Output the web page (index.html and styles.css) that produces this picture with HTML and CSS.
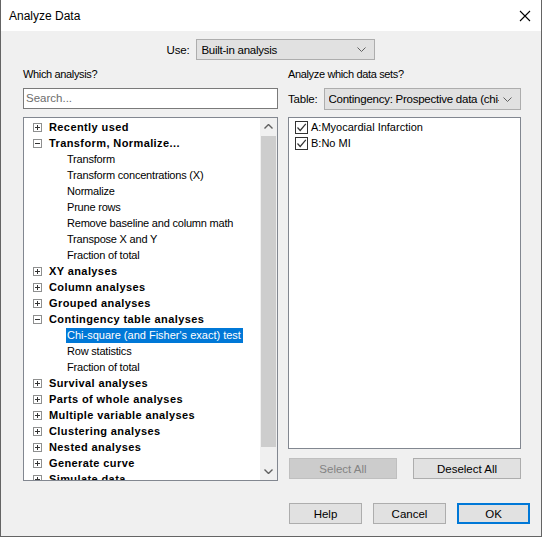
FILE: index.html
```html
<!DOCTYPE html>
<html lang="en">
<head>
  <meta charset="UTF-8">
  <title>Analyze Data</title>
  <link rel="stylesheet" href="styles.css">
</head>
<body>
  <div class="dialog">
    <div class="titlebar">
      <span class="title">Analyze Data</span>
      <svg class="close" width="12" height="12" viewBox="0 0 12 12">
        <path d="M1 1 L11 11 M11 1 L1 11" stroke="#000" stroke-width="1.1" fill="none"/>
      </svg>
    </div>

    <div class="content">
      <div class="use-row">
        <span class="label">Use:</span>
        <div class="combo use-combo">
          <span class="combo-text">Built-in analysis</span>
          <svg class="chevron" width="9" height="5" viewBox="0 0 9 5"><path d="M0.5 0.5 L4.5 4.5 L8.5 0.5" stroke="#606060" fill="none"/></svg>
        </div>
      </div>

      <div class="columns">
        <div class="col col-left">
          <div class="caption">Which analysis?</div>
          <div class="search">Search...</div>
          <div class="tree">
            <div class="tree-list">
              <div class="row node"><span class="toggle plus"></span><span class="text">Recently used</span></div>
              <div class="row node"><span class="toggle minus"></span><span class="text">Transform, Normalize...</span></div>
              <div class="row leaf"><span class="text">Transform</span></div>
              <div class="row leaf"><span class="text">Transform concentrations (X)</span></div>
              <div class="row leaf"><span class="text">Normalize</span></div>
              <div class="row leaf"><span class="text">Prune rows</span></div>
              <div class="row leaf"><span class="text">Remove baseline and column math</span></div>
              <div class="row leaf"><span class="text">Transpose X and Y</span></div>
              <div class="row leaf"><span class="text">Fraction of total</span></div>
              <div class="row node"><span class="toggle plus"></span><span class="text">XY analyses</span></div>
              <div class="row node"><span class="toggle plus"></span><span class="text">Column analyses</span></div>
              <div class="row node"><span class="toggle plus"></span><span class="text">Grouped analyses</span></div>
              <div class="row node"><span class="toggle minus"></span><span class="text">Contingency table analyses</span></div>
              <div class="row leaf"><span class="text selected">Chi-square (and Fisher's exact) test</span></div>
              <div class="row leaf"><span class="text">Row statistics</span></div>
              <div class="row leaf"><span class="text">Fraction of total</span></div>
              <div class="row node"><span class="toggle plus"></span><span class="text">Survival analyses</span></div>
              <div class="row node"><span class="toggle plus"></span><span class="text">Parts of whole analyses</span></div>
              <div class="row node"><span class="toggle plus"></span><span class="text">Multiple variable analyses</span></div>
              <div class="row node"><span class="toggle plus"></span><span class="text">Clustering analyses</span></div>
              <div class="row node"><span class="toggle plus"></span><span class="text">Nested analyses</span></div>
              <div class="row node"><span class="toggle plus"></span><span class="text">Generate curve</span></div>
              <div class="row node"><span class="toggle plus"></span><span class="text">Simulate data</span></div>
            </div>
            <div class="vscroll">
              <div class="arrow">
                <svg width="9" height="5" viewBox="0 0 9 5"><path d="M0.5 4.5 L4.5 0.5 L8.5 4.5" stroke="#606060" stroke-width="1.4" fill="none"/></svg>
              </div>
              <div class="track"><div class="thumb"></div></div>
              <div class="arrow">
                <svg width="9" height="5" viewBox="0 0 9 5"><path d="M0.5 0.5 L4.5 4.5 L8.5 0.5" stroke="#606060" stroke-width="1.4" fill="none"/></svg>
              </div>
            </div>
          </div>
        </div>

        <div class="col col-right">
          <div class="caption">Analyze which data sets?</div>
          <div class="table-row">
            <span class="label">Table:</span>
            <div class="combo table-combo">
              <span class="combo-text">Contingency: Prospective data (chi-square)</span>
              <svg class="chevron" width="9" height="5" viewBox="0 0 9 5"><path d="M0.5 0.5 L4.5 4.5 L8.5 0.5" stroke="#606060" fill="none"/></svg>
            </div>
          </div>
          <div class="datasets">
            <div class="check-row">
              <span class="checkbox"><svg width="11" height="11" viewBox="0 0 11 11"><path d="M1.5 5.5 L4.2 8.5 L9.8 1.8" stroke="#333" stroke-width="1.2" fill="none"/></svg></span>
              <span>A:Myocardial Infarction</span>
            </div>
            <div class="check-row">
              <span class="checkbox"><svg width="11" height="11" viewBox="0 0 11 11"><path d="M1.5 5.5 L4.2 8.5 L9.8 1.8" stroke="#333" stroke-width="1.2" fill="none"/></svg></span>
              <span>B:No MI</span>
            </div>
          </div>
          <div class="select-buttons">
            <button class="btn wide" disabled>Select All</button>
            <button class="btn wide">Deselect All</button>
          </div>
        </div>
      </div>
    </div>

    <div class="footer">
      <button class="btn">Help</button>
      <button class="btn">Cancel</button>
      <button class="btn default">OK</button>
    </div>
  </div>
</body>
</html>
```

FILE: styles.css
```css
* {
  box-sizing: border-box;
}
body {
  margin: 0;
  font-family: "Liberation Sans", Arial, sans-serif;
  font-size: 11px;
  color: #000;
  background: #fff;
}
.dialog {
  width: 542px;
  height: 537px;
  background: #f0f0f0;
  border: 1px solid #646464;
  border-top: none;
}

/* title bar */
.titlebar {
  height: 31px;
  background: #fff;
  display: flex;
  align-items: center;
  justify-content: space-between;
  padding: 0 10px 0 8px;
}
.title {
  font-size: 12px;
}
.close {
  display: block;
}

.content {
  padding: 8px 20px 0 22px;
}

/* combo boxes */
.combo {
  display: flex;
  align-items: center;
  background: #e1e1e1;
  border: 1px solid #adadad;
  padding: 0 8px 0 4px;
  overflow: hidden;
}
.combo-text {
  flex: 1;
  white-space: nowrap;
  overflow: hidden;
  font-size: 11.5px;
  letter-spacing: -0.25px;
}
.chevron {
  flex: none;
  margin-left: 4px;
}
.label {
  font-size: 11.5px;
  letter-spacing: -0.2px;
}

.use-row {
  display: flex;
  justify-content: center;
  align-items: center;
  gap: 7px;
  padding-right: 2px;
}
.use-combo {
  width: 179px;
  height: 21px;
}

.columns {
  display: flex;
  align-items: flex-start;
  gap: 10px;
  margin-top: 6px;
}
.col-left {
  width: 255px;
}
.col-right {
  width: 233px;
}
.caption {
  line-height: 16px;
  font-size: 11px;
  letter-spacing: -0.35px;
}

/* analysis tree */
.search {
  margin-top: 6px;
  height: 21px;
  background: #fff;
  border: 1px solid #7a7a7a;
  padding: 3px 2px;
  color: #6d6d6d;
  font-size: 11.5px;
}
.tree {
  margin-top: 8px;
  height: 364px;
  border: 1px solid #828790;
  background: #fff;
  display: flex;
}
.tree-list {
  flex: 1;
  padding-top: 1px;
  overflow: hidden;
}
.row {
  height: 16px;
  display: flex;
  align-items: center;
  white-space: nowrap;
}
.node {
  padding-left: 9px;
  font-weight: bold;
  letter-spacing: 0.4px;
}
.node .text {
  margin-left: 7px;
}
.leaf {
  padding-left: 42px;
  letter-spacing: -0.2px;
}
.leaf .text {
  padding: 1px 1px;
  line-height: 13px;
}
.leaf .selected {
  background: #0078d7;
  color: #fff;
  letter-spacing: 0;
  padding-right: 2px;
}
.toggle {
  position: relative;
  width: 9px;
  height: 9px;
  border: 1px solid #8e8f8f;
  background: #fff;
  flex: none;
}
.toggle::before {
  content: "";
  position: absolute;
  left: 1px;
  top: 3px;
  width: 5px;
  height: 1px;
  background: #333;
}
.toggle.plus::after {
  content: "";
  position: absolute;
  left: 3px;
  top: 1px;
  width: 1px;
  height: 5px;
  background: #333;
}

/* scroll bar */
.vscroll {
  width: 17px;
  flex: none;
  display: flex;
  flex-direction: column;
  background: #f0f0f0;
}
.arrow {
  height: 17px;
  display: flex;
  align-items: center;
  justify-content: center;
}
.track {
  flex: 1;
}
.thumb {
  margin: 1px 1px 0;
  height: 311px;
  background: #cdcdcd;
}

/* data sets */
.table-row {
  margin-top: 6px;
  display: flex;
  align-items: center;
  gap: 6px;
}
.table-combo {
  width: 198px;
  height: 22px;
  margin-left: auto;
}
.datasets {
  margin-top: 7px;
  height: 332px;
  border: 1px solid #828790;
  background: #fff;
  padding: 1px 0 0 6px;
}
.check-row {
  height: 16px;
  display: flex;
  align-items: center;
  gap: 3px;
}
.checkbox {
  width: 13px;
  height: 13px;
  border: 1px solid #333;
  display: flex;
  align-items: center;
  justify-content: center;
}
.select-buttons {
  margin-top: 9px;
  display: flex;
  justify-content: space-between;
  padding: 0 0 0 1px;
}

/* push buttons */
.btn {
  width: 73px;
  height: 21px;
  padding: 0;
  font-family: inherit;
  font-size: 11.5px;
  color: #000;
  background: #e1e1e1;
  border: 1px solid #adadad;
}
.btn.wide {
  width: 108px;
}
.btn:disabled {
  background: #cccccc;
  border-color: #bfbfbf;
  color: #838383;
}
.btn.default {
  border: 2px solid #0078d7;
}

.footer {
  margin-top: 22px;
  display: flex;
  justify-content: flex-end;
  gap: 11px;
  padding-right: 11px;
}
```
